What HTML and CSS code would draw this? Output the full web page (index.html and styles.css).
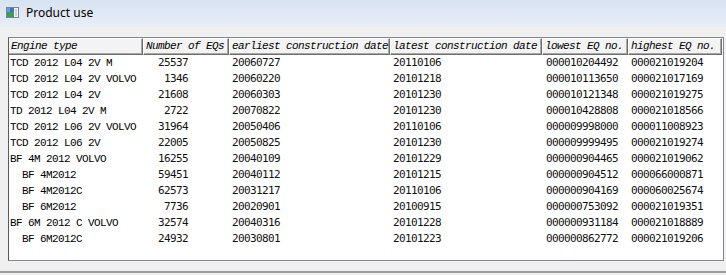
FILE: index.html
```html
<!DOCTYPE html>
<html>
<head>
<meta charset="utf-8">
<link rel="stylesheet" href="styles.css">
</head>
<body>
<div class="window">
  <div class="titlebar">
    <svg class="appicon" width="13" height="11" viewBox="0 0 13 11">
      <rect x="0.5" y="0.5" width="12" height="10" fill="#f4f6f8" stroke="#7a8594"/>
      <rect x="1" y="1" width="7" height="9" fill="#3a78b8"/>
      <rect x="1" y="5" width="7" height="5" fill="#3d9a5a"/>
      <rect x="1" y="1" width="3" height="4" fill="#5fa0d8"/>
      <rect x="9" y="2" width="2" height="7" fill="#c9d3df"/>
    </svg>
    <span class="title">Product use</span>
  </div>
  <div class="content">
    <div class="grid">
      <div class="row head">
        <div class="hc">Engine type</div>
        <div class="hc">Number of EQs</div>
        <div class="hc">earliest construction date</div>
        <div class="hc">latest construction date</div>
        <div class="hc">lowest EQ no.</div>
        <div class="hc">highest EQ no.</div>
      </div>
      <div class="row"><div class="c">TCD 2012 L04 2V M</div><div class="c num">25537</div><div class="c">20060727</div><div class="c">20110106</div><div class="c lo">000010204492</div><div class="c hi">000021019204</div></div>
      <div class="row"><div class="c">TCD 2012 L04 2V VOLVO</div><div class="c num">1346</div><div class="c">20060220</div><div class="c">20101218</div><div class="c lo">000010113650</div><div class="c hi">000021017169</div></div>
      <div class="row"><div class="c">TCD 2012 L04 2V</div><div class="c num">21608</div><div class="c">20060303</div><div class="c">20101230</div><div class="c lo">000010121348</div><div class="c hi">000021019275</div></div>
      <div class="row"><div class="c">TD 2012 L04 2V M</div><div class="c num">2722</div><div class="c">20070822</div><div class="c">20101230</div><div class="c lo">000010428808</div><div class="c hi">000021018566</div></div>
      <div class="row"><div class="c">TCD 2012 L06 2V VOLVO</div><div class="c num">31964</div><div class="c">20050406</div><div class="c">20110106</div><div class="c lo">000009998000</div><div class="c hi">000011008923</div></div>
      <div class="row"><div class="c">TCD 2012 L06 2V</div><div class="c num">22005</div><div class="c">20050825</div><div class="c">20101230</div><div class="c lo">000009999495</div><div class="c hi">000021019274</div></div>
      <div class="row"><div class="c">BF 4M 2012 VOLVO</div><div class="c num">16255</div><div class="c">20040109</div><div class="c">20101229</div><div class="c lo">000000904465</div><div class="c hi">000021019062</div></div>
      <div class="row"><div class="c sub">BF 4M2012</div><div class="c num">59451</div><div class="c">20040112</div><div class="c">20101215</div><div class="c lo">000000904512</div><div class="c hi">000066000871</div></div>
      <div class="row"><div class="c sub">BF 4M2012C</div><div class="c num">62573</div><div class="c">20031217</div><div class="c">20110106</div><div class="c lo">000000904169</div><div class="c hi">000060025674</div></div>
      <div class="row"><div class="c sub">BF 6M2012</div><div class="c num">7736</div><div class="c">20020901</div><div class="c">20100915</div><div class="c lo">000000753092</div><div class="c hi">000021019351</div></div>
      <div class="row"><div class="c">BF 6M 2012 C VOLVO</div><div class="c num">32574</div><div class="c">20040316</div><div class="c">20101228</div><div class="c lo">000000931184</div><div class="c hi">000021018889</div></div>
      <div class="row"><div class="c sub">BF 6M2012C</div><div class="c num">24932</div><div class="c">20030801</div><div class="c">20101223</div><div class="c lo">000000862772</div><div class="c hi">000021019206</div></div>
    </div>
  </div>
  <div class="bottomedge"></div>
</div>
</body>
</html>
```

FILE: styles.css
```css
html, body {
  margin: 0;
  padding: 0;
  background: #f0f0f0;
}
.window {
  width: 726px;
  height: 275px;
  display: flex;
  flex-direction: column;
  overflow: hidden;
}
.titlebar {
  height: 27px;
  flex: none;
  display: flex;
  align-items: center;
  gap: 7px;
  padding-left: 6px;
  background: linear-gradient(#d8e3f1, #e7eef7);
}
.appicon {
  flex: none;
  margin-top: -2px;
}
.title {
  font-family: "Noto Sans", "Open Sans", sans-serif;
  font-size: 12px;
  color: #000;
  margin-top: -2px;
}
.content {
  flex: none;
  padding: 10px 2px 0 8px;
  height: 225px;
}
.grid {
  height: 224px;
  box-sizing: border-box;
  border: 1px solid #828790;
  border-left-color: #5a5a5a;
  background: #fff;
  display: flex;
  flex-direction: column;
  overflow: hidden;
}
.row {
  display: grid;
  grid-template-columns: 134px 86px 161px 152px 86px 94px;
  height: 16px;
  flex: none;
  font-family: "DejaVu Sans Mono", "Liberation Mono", monospace;
  font-size: 11px;
  letter-spacing: -0.62px;
  line-height: 16px;
  color: #111;
  white-space: pre;
}
.row.head {
  height: 17px;
  line-height: 15px;
  font-family: "Liberation Mono", monospace;
  font-style: italic;
  letter-spacing: -0.6px;
  color: #000;
}
.hc {
  background: #f3f3f3;
  border-top: 1px solid #ffffff;
  border-left: 1px solid #ffffff;
  border-right: 1px solid #6e6e6e;
  border-bottom: 1px solid #6e6e6e;
  box-shadow: inset -1px -1px 0 #a8a8a8;
  padding-left: 2px;
  overflow: hidden;
  white-space: pre;
}
.hc:first-child {
  border-left: none;
}
.c {
  overflow: hidden;
  padding-left: 3px;
}
.c:first-child {
  padding-left: 1px;
  font-family: "Liberation Mono", monospace;
  font-size: 11px;
  letter-spacing: -0.6px;
  color: #000;
}
.c.sub {
  padding-left: 13px;
}
.c.num {
  text-align: right;
  padding-right: 41px;
  padding-left: 0;
}
.c.lo {
  padding-left: 4px;
}
.bottomedge {
  margin-top: 9px;
  height: 2px;
  background: #9a9a9a;
  flex: none;
}
```
